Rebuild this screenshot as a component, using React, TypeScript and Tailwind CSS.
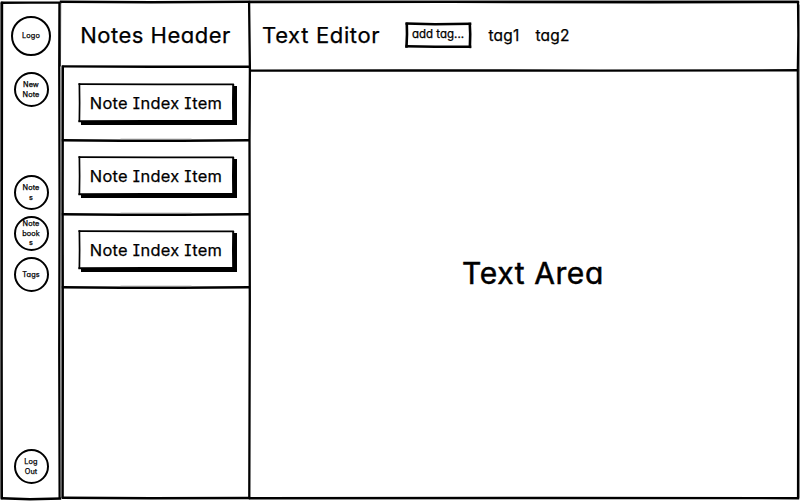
import type { ReactNode } from 'react';

type Stroke = { d: string; w?: number; c?: string };

// Hand-drawn pen strokes laid over the edges of the box that holds them.
function Sketch({ strokes }: { strokes: Stroke[] }) {
  return (
    <svg className="pointer-events-none absolute inset-0 h-full w-full overflow-visible" fill="none" aria-hidden="true">
      {strokes.map((s) => (
        <path key={s.d} d={s.d} stroke={s.c ?? '#000'} strokeWidth={s.w ?? 2.4} strokeLinecap="square" />
      ))}
    </svg>
  );
}

function Circle({ children, className }: { children: ReactNode; className: string }) {
  return (
    <div
      className={`flex shrink-0 items-center justify-center rounded-full border-2 border-black text-center text-[7.3px] leading-[9.6px] tracking-[0.1px] ${className}`}
    >
      <span>{children}</span>
    </div>
  );
}

function NoteItem() {
  return (
    <li className="relative h-[73.6px] pt-[15.6px] pl-[17px]">
      <Sketch strokes={[{ d: 'M2 73.3 L60 73.7 L120 73.7 L187 73.3' }, { d: 'M60 72.2 L130 72.2', w: 0.8, c: '#888' }]} />
      <div className="relative flex h-[39px] w-[156px] items-center justify-center bg-white pt-[2px] shadow-[3px_3px_0_#000]">
        <Sketch
          strokes={[
            { d: 'M1.4 1.2 L80 1.3 L155 1.3', w: 1.8 },
            { d: 'M1.4 1 L1.6 20 L1.4 38', w: 1.7 },
            { d: 'M155.2 2 L155 20 L155.2 38', w: 2 },
            { d: 'M1.4 38.2 L70 38 L155 38', w: 2 },
          ]}
        />
        <span className="text-[16.4px] leading-none tracking-[0.3px] whitespace-nowrap">Note Index Item</span>
      </div>
    </li>
  );
}

export default function App() {
  return (
    <div className="relative flex h-[501px] w-[800px] overflow-hidden bg-white font-['Inter',sans-serif] text-black [-webkit-text-stroke:0.25px_#000] [font-feature-settings:'cv11','cv08']">
      <nav className="relative flex w-[61px] shrink-0 flex-col items-center pt-[16px] pb-[17px] pl-px">
        <Sketch
          strokes={[
            { d: 'M2 3 L1.8 200 L1.6 350 L1.8 498' },
            { d: 'M0.6 3 L0.6 497', w: 0.9, c: '#555' },
            { d: 'M2 2.8 L30 2.6 L60 2.6', w: 2.4 },
            { d: 'M59.4 3 L59.2 65 L59.5 200 L59.2 350 L59.6 498', w: 2.2 },
            { d: 'M2 498.3 L30 499.2 L60 498.5' },
          ]}
        />
        <Circle className="h-[40px] w-[40px]">Logo</Circle>
        <Circle className="mt-[16px] h-[35px] w-[35px]">New<br />Note</Circle>
        <div className="mt-[68px] flex flex-col gap-[6px]">
          <Circle className="h-[35px] w-[35px]">Note<br />s</Circle>
          <Circle className="h-[35px] w-[35px]">Note<br />book<br />s</Circle>
          <Circle className="h-[35px] w-[35px]">Tags</Circle>
        </div>
        <Circle className="mt-auto h-[35px] w-[35px]">Log<br />Out</Circle>
      </nav>

      <section className="relative flex w-[189px] shrink-0 flex-col">
        <Sketch
          strokes={[
            { d: 'M0 1.8 L90 2.2 L188 1.8' },
            { d: 'M-0.3 3 L-0.5 66', w: 1, c: '#333' },
            { d: 'M1.8 67 L1.6 200 L1.8 350 L1.6 497', w: 2.4 },
            { d: 'M0.2 68 L0.2 497', w: 0.8, c: '#555' },
            { d: 'M188.1 3 L188.9 70 L188.5 140 L188.8 300 L188.3 497', w: 2.3 },
            { d: 'M2 497.8 L90 498.3 L188 498' },
          ]}
        />
        <header className="relative flex h-[67px] items-center justify-center pt-[3px]">
          <Sketch strokes={[{ d: 'M2 66.4 L90 66.8 L187 66.8' }]} />
          <h1 className="text-[22px] leading-none tracking-[0.5px] whitespace-nowrap">Notes Header</h1>
        </header>
        <ul>
          <NoteItem />
          <NoteItem />
          <NoteItem />
        </ul>
      </section>

      <main className="relative flex min-w-0 flex-1 flex-col">
        <Sketch
          strokes={[
            { d: 'M0 2 L200 1.9 L400 2.2 L548 2' },
            { d: 'M0 0.6 L548 0.5', w: 0.8, c: '#777' },
            { d: 'M548 3 L548.3 35 L547.8 70 L548.3 250 L548 498', w: 2.2 },
            { d: 'M549.5 5 L549.5 497', w: 0.7, c: '#666' },
            { d: 'M0 498.2 L300 498 L548 498.2' },
          ]}
        />
        <header className="relative flex h-[70px] items-center pl-[12px]">
          <Sketch strokes={[{ d: 'M1 70.6 L150 70.5 L350 70.6 L547 70.3' }]} />
          <h2 className="w-[118px] text-[22px] leading-none tracking-[0.65px] whitespace-nowrap">Text Editor</h2>
          <div className="relative ml-[25px] flex h-[26px] w-[66px] shrink-0 items-center justify-center">
            <Sketch
              strokes={[
                { d: 'M1.8 1.6 L30 2.2 L65 1.8', w: 2.6 },
                { d: 'M1.8 2 L2 12 L1.5 24.5', w: 2.6 },
                { d: 'M64.8 2 L65.2 12 L64.9 24.8', w: 2.6 },
                { d: 'M1.8 24.2 L30 24.8 L65 24.8', w: 2.6 },
              ]}
            />
            <span className="text-[11.5px] leading-none whitespace-nowrap">add tag...</span>
          </div>
          <span className="ml-[17.5px] w-[47px] pt-px text-[15.5px] leading-none tracking-[0.2px]">tag1</span>
          <span className="pt-px text-[15.5px] leading-none tracking-[0.2px]">tag2</span>
        </header>
        <div className="flex flex-1 items-center justify-center pb-[26px] pl-[16px]">
          <p className="text-[30px] leading-none tracking-[0.6px] whitespace-nowrap [-webkit-text-stroke:0.5px_#000]">Text Area</p>
        </div>
      </main>
    </div>
  );
}
